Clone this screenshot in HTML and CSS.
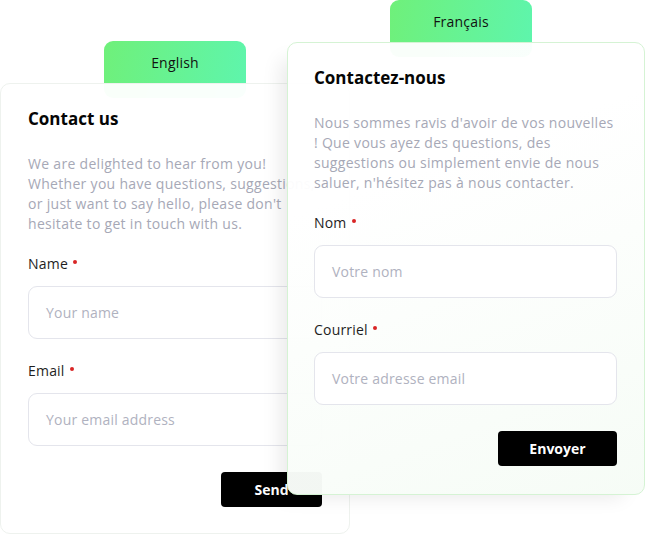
FILE: index.html
```html
<!DOCTYPE html>
<html lang="en">
<head>
<meta charset="utf-8">
<title>Contact</title>
<link rel="stylesheet" href="styles.css">
</head>
<body>
<div class="canvas">
  <section class="panel panel-en">
    <div class="tab">English</div>
    <div class="card">
      <h2 class="title">Contact us</h2>
      <p class="intro">We are delighted to hear from you! Whether you have questions, suggestions, or just want to say hello, please don't hesitate to get in touch with us.</p>
      <label class="label">Name <span class="req"></span></label>
      <div class="input">Your name</div>
      <label class="label">Email <span class="req"></span></label>
      <div class="input">Your email address</div>
      <div class="actions"><button class="btn btn-en">Send</button></div>
    </div>
  </section>
  <section class="panel panel-fr">
    <div class="tab">Français</div>
    <div class="card card-fr">
      <h2 class="title">Contactez-nous</h2>
      <p class="intro">Nous sommes ravis d'avoir de vos nouvelles ! Que vous ayez des questions, des suggestions ou simplement envie de nous saluer, n'hésitez pas à nous contacter.</p>
      <label class="label">Nom <span class="req"></span></label>
      <div class="input">Votre nom</div>
      <label class="label">Courriel <span class="req"></span></label>
      <div class="input">Votre adresse email</div>
      <div class="actions"><button class="btn btn-fr">Envoyer</button></div>
    </div>
  </section>
</div>
</body>
</html>
```

FILE: styles.css
```css
* { box-sizing: border-box; }
html, body { margin: 0; padding: 0; background: #fff; }
body {
  font-family: "Open Sans", "Liberation Sans", sans-serif;
  width: 645px;
  height: 535px;
  overflow: hidden;
}
.canvas { position: relative; width: 645px; height: 535px; }
.panel { position: absolute; display: flex; flex-direction: column; align-items: center; }
.panel-en { left: 0; top: 41px; width: 350px; z-index: 1; }
.panel-fr { left: 287px; top: 0; width: 358px; z-index: 2; }
.tab {
  width: 142px;
  height: 57px;
  border-radius: 9px;
  background: linear-gradient(100deg, #6ff07a 0%, #5ef5ad 100%);
  color: #111;
  font-size: 14px;
  letter-spacing: 0.2px;
  text-align: center;
  padding-top: 13px;
  line-height: 18px;
}
.panel-fr .tab { margin-right: 10px; }
.card {
  width: 100%;
  margin-top: -15px;
  background: rgba(255,255,255,0.96);
  border: 1px solid #ececef;
  border-radius: 10px;
  padding: 25px 27px 26px 27px;
  display: flex;
  flex-direction: column;
}
.panel-en .card { height: 451px; border-color: #eef2ee; }
.card-fr {
  height: 453px;
  padding-left: 26px;
  padding-right: 27px;
  border-color: #d5f3d4;
  background: linear-gradient(160deg, rgba(255,255,255,0.96) 30%, rgba(246,252,246,0.98) 100%);
  box-shadow: -14px 10px 20px -8px rgba(0,0,0,0.09);
}
.title {
  margin: 0;
  font-size: 17px;
  font-weight: 700;
  color: #050505;
  line-height: 20px;
}
.intro {
  margin: 25px 0 0 0;
  font-size: 14px;
  line-height: 20px;
  color: #a6a8b6;
  letter-spacing: 0.3px;
}
.label {
  display: flex;
  align-items: center;
  margin-top: 20px;
  font-size: 14px;
  color: #1e1e1e;
  line-height: 20px;
  letter-spacing: 0.2px;
}
.req {
  width: 4px;
  height: 4px;
  border-radius: 50%;
  background: #d92525;
  margin-left: 5px;
  margin-bottom: 5px;
}
.input {
  margin-top: 12px;
  height: 53px;
  border: 1.5px solid #e4e5ec;
  border-radius: 9px;
  padding: 0 17px;
  display: flex;
  align-items: center;
  font-size: 14px;
  letter-spacing: 0.2px;
  color: #b0b2c0;
  background: #fff;
}
.input + .label { margin-top: 22px; }
.actions { display: flex; justify-content: flex-end; margin-top: 26px; }
.btn {
  height: 35px;
  background: #000;
  color: #fff;
  border: none;
  border-radius: 4px;
  font-family: inherit;
  font-weight: 700;
  font-size: 14px;
}
.btn-en { width: 101px; }
.btn-fr { width: 119px; }
```
